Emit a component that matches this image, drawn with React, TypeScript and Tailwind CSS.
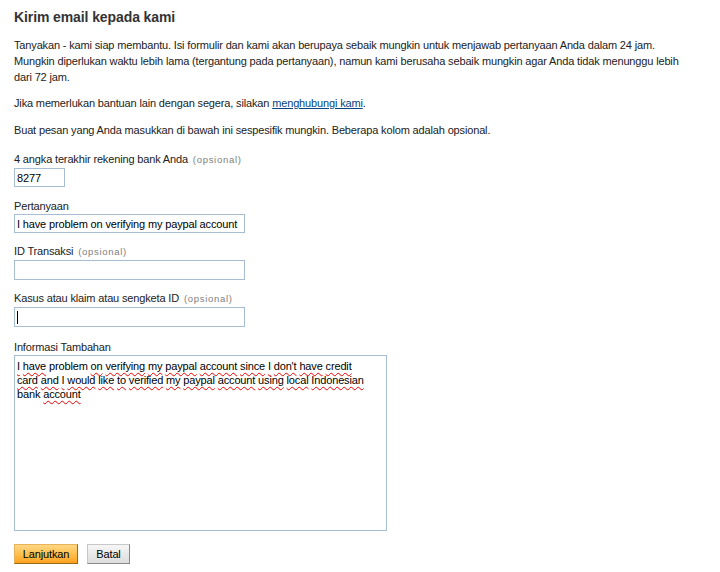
const font = { fontFamily: '"Liberation Sans", Arial, sans-serif' };

function Opsional() {
  return <span className="ml-[2px] text-[9.5px] tracking-[0.7px] text-[#808080]">(opsional)</span>;
}

function Wavy({ children }: { children: React.ReactNode }) {
  return (
    <span className="underline decoration-wavy decoration-[#e00] decoration-1 underline-offset-[2px]">{children}</span>
  );
}

export default function App() {
  return (
    <div
      className="h-[572px] w-[720px] overflow-hidden bg-white pl-[14px] pt-[8px] text-[11px] leading-[16px] tracking-[-0.15px] text-[#222]"
      style={font}
    >
      <h1 className="text-[14px] font-bold leading-[18px] tracking-[-0.1px] text-[#333]">Kirim email kepada kami</h1>

      <p className="mt-[11px] whitespace-nowrap">
        Tanyakan - kami siap membantu. Isi formulir dan kami akan berupaya sebaik mungkin untuk menjawab pertanyaan Anda dalam 24 jam.
        <br />
        Mungkin diperlukan waktu lebih lama (tergantung pada pertanyaan), namun kami berusaha sebaik mungkin agar Anda tidak menunggu lebih
        <br />
        dari 72 jam.
      </p>

      <p className="mt-[10px] whitespace-nowrap">
        Jika memerlukan bantuan lain dengan segera, silakan{' '}
        <a href="#" className="text-[#084482] underline">menghubungi kami</a>.
      </p>

      <p className="mt-[11px] whitespace-nowrap">
        Buat pesan yang Anda masukkan di bawah ini sespesifik mungkin. Beberapa kolom adalah opsional.
      </p>

      <form className="flex flex-col">
        <label className="mt-[13px]">
          4 angka terakhir rekening bank Anda <Opsional />
        </label>
        <input
          defaultValue="8277"
          className="h-[19px] w-[51px] border border-[#a7bdd6] px-[2px] text-[11px] tracking-[-0.15px] text-black outline-none"
          style={font}
        />

        <label className="mt-[11px]">Pertanyaan</label>
        <input
          defaultValue="I have problem on verifying my paypal account"
          className="h-[19px] w-[231px] border border-[#a7bdd6] px-[2px] text-[11px] tracking-[-0.15px] text-black outline-none"
          style={font}
        />

        <label className="mt-[10px]">
          ID Transaksi <Opsional />
        </label>
        <input className="h-[20px] w-[231px] border border-[#a7bdd6] px-[2px] text-[11px] outline-none" style={font} />

        <label className="mt-[10px]">
          Kasus atau klaim atau sengketa ID <Opsional />
        </label>
        <div className="flex h-[20px] w-[231px] items-center border border-[#a7bdd6] px-[2px]">
          <span className="h-[13px] w-px bg-black" />
        </div>

        <label className="mt-[12px]">Informasi Tambahan</label>
        <div className="h-[176px] w-[373px] border border-[#a7bdd6] px-[2px] pt-[3px] text-[11px] leading-[14px] text-black">
          <Wavy>I</Wavy> <Wavy>have</Wavy> problem <Wavy>on</Wavy> <Wavy>verifying</Wavy> <Wavy>my</Wavy> <Wavy>paypal</Wavy>{' '}
          <Wavy>account</Wavy> <Wavy>since</Wavy> <Wavy>I</Wavy> <Wavy>don't</Wavy> <Wavy>have</Wavy> <Wavy>credit</Wavy>
          <br />
          <Wavy>card</Wavy> <Wavy>and</Wavy> <Wavy>I</Wavy> <Wavy>would</Wavy> <Wavy>like</Wavy> <Wavy>to</Wavy> <Wavy>verified</Wavy>{' '}
          <Wavy>my</Wavy> <Wavy>paypal</Wavy> <Wavy>account</Wavy> <Wavy>using</Wavy> <Wavy>local</Wavy> <Wavy>Indonesian</Wavy>
          <br />
          bank <Wavy>account</Wavy>
        </div>

        <div className="mt-[13px] flex gap-[9px]">
          <button
            type="button"
            className="h-[20px] w-[64px] border border-[#e7b25a] border-r-[#9a6a1a] border-b-[#9a6a1a] bg-gradient-to-b from-[#ffd682] via-[#ffc14d] to-[#ffa11a] text-[11px] text-black"
            style={font}
          >
            Lanjutkan
          </button>
          <button
            type="button"
            className="h-[20px] w-[43px] border border-[#c8c8c8] border-r-[#8a8a8a] border-b-[#8a8a8a] bg-gradient-to-b from-[#f6f6f6] to-[#dddddd] text-[11px] text-black"
            style={font}
          >
            Batal
          </button>
        </div>
      </form>
    </div>
  );
}
